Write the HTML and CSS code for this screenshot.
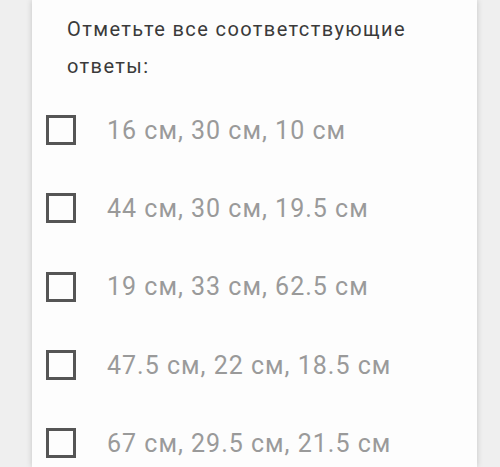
FILE: index.html
```html
<!DOCTYPE html>
<html lang="ru">
  <head>
    <title>Вопрос</title>
    <link rel="stylesheet" href="styles.css">
  </head>
  <body>
    <div class="card">
      <p class="hint">Отметьте все соответствующие ответы:</p>
      <ul class="options">
        <li class="option"><span class="box"></span>16 см, 30 см, 10 см</li>
        <li class="option"><span class="box"></span>44 см, 30 см, 19.5 см</li>
        <li class="option"><span class="box"></span>19 см, 33 см, 62.5 см</li>
        <li class="option"><span class="box"></span>47.5 см, 22 см, 18.5 см</li>
        <li class="option"><span class="box"></span>67 см, 29.5 см, 21.5 см</li>
      </ul>
    </div>
  </body>
</html>
```

FILE: styles.css
```css
body {
    margin: 0;
    padding: 0 23px 0 32px;
    background-color: #efefef;
    font-family: Roboto, "Noto Sans", sans-serif;
    height: 467px;
    overflow: hidden;
  }

  .card {
    background-color: #fdfdfd;
    height: 100%;
    box-shadow: 0 0 6px rgba(0, 0, 0, 0.18);
    padding: 11px 0 0 35px;
    box-sizing: border-box;
  }

  .hint {
    margin: 0;
    width: 360px;
    font-size: 20px;
    line-height: 37px;
    color: #3a3a3a;
    letter-spacing: 1.4px;
  }

  .options {
    list-style: none;
    margin: 6px 0 0 -21px;
    padding: 0;
  }

  .option {
    display: flex;
    align-items: center;
    height: 78.3px;
    font-size: 25px;
    letter-spacing: 1px;
    color: #9a9a9a;
  }

  .box {
    width: 24px;
    height: 24px;
    border: 3px solid #555;
    margin-right: 31px;
    flex-shrink: 0;
  }
```
